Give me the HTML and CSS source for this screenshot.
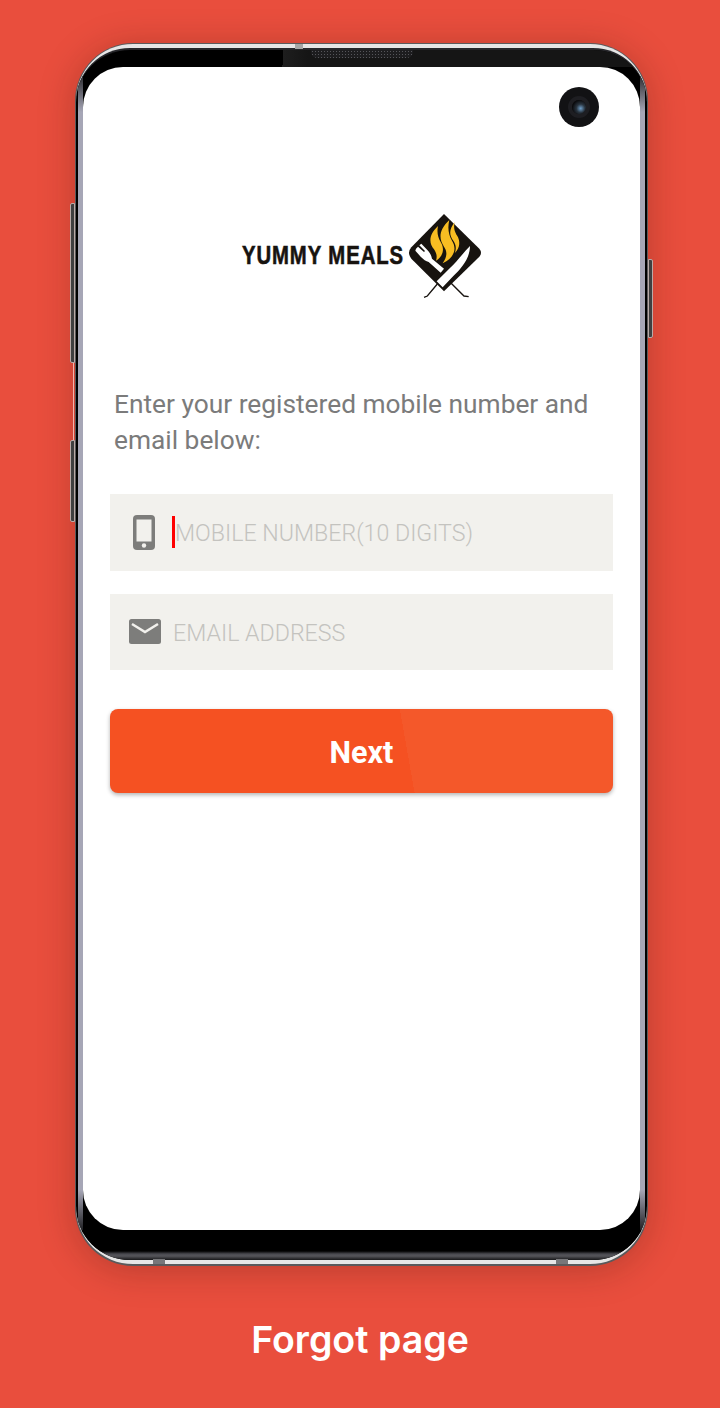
FILE: index.html
```html
<!DOCTYPE html>
<html lang="en">
<head>
    <meta charset="UTF-8">
    <meta name="viewport" content="width=device-width, initial-scale=1.0">
    <title>Forgot page</title>
    <link rel="stylesheet" href="styles.css">
</head>
<body>
    <div class="page">
        <div class="phone">
            <span class="side-key key-volume-up"></span>
            <span class="key-gap"></span>
            <span class="side-key key-bixby"></span>
            <span class="side-key key-power"></span>
            <span class="band-mark mark-top"></span>
            <span class="band-mark mark-bottom-left"></span>
            <span class="band-mark mark-bottom-right"></span>

            <div class="rim">
                <div class="bezel">
                    <div class="bezel-top">
                        <div class="speaker"></div>
                    </div>

                    <div class="screen">
                        <div class="camera"><span class="lens"></span></div>

                        <div class="logo">
                            <span class="logo-text">YUMMY MEALS</span>
                            <svg class="logo-mark" viewBox="555 30 240 270">
                                <path fill="#17130f" d="M672 42 L778 146 Q788 158 778 170 L672 274 L574 176 Q560 158 574 142 Z"/>
                                <path fill="#f8bd22" d="M654 78 C626 105 626 128 642 148 C650 160 652 170 648 182 C674 166 672 142 662 126 C654 112 650 98 654 78Z"/>
                                <path fill="#f8bd22" d="M688 60 C656 90 656 116 672 140 C682 154 682 170 668 190 C706 172 710 144 696 122 C686 105 682 85 688 60Z"/>
                                <path fill="#f8bd22" d="M704 66 C686 90 688 106 700 122 C708 134 710 146 704 160 C722 142 720 122 712 108 C704 95 700 85 704 66Z"/>
                                <path fill="#fff" d="M588 146 L594 140 L612 156 L615 153 L598 136 L604 131 L622 150 C630 158 634 166 636 176 L672 206 L662 218 L626 186 C618 184 610 178 602 170 L586 152Z"/>
                                <path fill="#fff" d="M750 138 C750 172 728 202 700 228 L668 262 L650 244 L690 204 C712 184 730 158 750 138Z"/>
                                <path fill="none" stroke="#17130f" stroke-width="4" d="M652 252 L622 288 L612 292 M692 248 L732 288 L746 290"/>
                            </svg>
                        </div>

                        <p class="intro">Enter your registered mobile number and email below:</p>

                        <form class="fields">
                            <div class="field">
                                <svg class="icon-phone" viewBox="0 0 22 35">
                                    <rect width="22" height="35" rx="4" fill="#7d7d7b"/>
                                    <rect x="3.5" y="4.5" width="15" height="22" fill="#f2f1ed"/>
                                    <circle cx="11" cy="30.5" r="2.2" fill="#f2f1ed"/>
                                </svg>
                                <span class="caret"></span>
                                <span class="placeholder">MOBILE NUMBER(10 DIGITS)</span>
                            </div>
                            <div class="field">
                                <svg class="icon-mail" viewBox="0 0 32 25">
                                    <rect width="32" height="25" rx="2.5" fill="#7d7d7b"/>
                                    <path d="M3 5 L16 13 L29 5" fill="none" stroke="#f2f1ed" stroke-width="2.6"/>
                                </svg>
                                <span class="placeholder">EMAIL ADDRESS</span>
                            </div>
                            <button class="next-button" type="button">Next</button>
                        </form>
                    </div>

                    <div class="bezel-bottom"></div>
                </div>
            </div>
        </div>

        <h1 class="caption">Forgot page</h1>
    </div>
</body>
</html>
```

FILE: styles.css
```css
body {
    margin: 0;
    background-color: #e94e3d;
}
.page {
    height: 1408px;
    padding-top: 43px;
    box-sizing: border-box;
    overflow: hidden;
}
.phone {
    position: relative;
    width: 573px;
    margin-left: 75px;
    padding: 1px 1px 2px 1px;
    box-sizing: border-box;
    background-color: #5a5a5c;
    border-radius: 58px;
    box-shadow: 0 4px 36px rgba(60, 20, 10, 0.28);
}
.rim {
    padding: 4px 0;
    background-color: #e6e6e6;
    border-radius: 57px;
}
.bezel {
    overflow: hidden;
    display: flex;
    flex-direction: column;
    background-color: #000;
    background-image:
        linear-gradient(to bottom, #000 12px, #a6a6b6 62px, #a6a6b6 calc(100% - 70px), #000 calc(100% - 20px)),
        linear-gradient(to bottom, #000 12px, #a6a6b6 62px, #a6a6b6 calc(100% - 70px), #000 calc(100% - 20px));
    background-size: 5px 100%, 5px 100%;
    background-position: 2px 0, calc(100% - 2px) 0;
    background-repeat: no-repeat;
    border-radius: 54px;
    border-top: 2px solid #26262a;
}
.bezel-top {
    height: 17px;
    display: flex;
    justify-content: center;
    background-image: linear-gradient(93deg, transparent 207px, #1e1e1e 207px, #151515 232px);
}
.speaker {
    width: 102px;
    height: 8px;
    border-radius: 0 0 6px 6px;
    background-color: #1d1d1f;
    background-image: radial-gradient(#55555a 0.8px, transparent 1px);
    background-size: 3px 3px;
}
.screen {
    position: relative;
    height: 1163px;
    margin: 0 7px;
    padding-top: 146px;
    box-sizing: border-box;
    background-color: #fff;
    border-radius: 40px;
}
.bezel-bottom {
    height: 30px;
    background-image: linear-gradient(to bottom, #000 21px, #4a4a50 24px, #55555a 26px, #18181a 30px);
}
.side-key {
    position: absolute;
    width: 5px;
    background-color: #3f3f40;
    border: 1px solid #b9a9a6;
    box-sizing: border-box;
}
.key-volume-up {
    left: -5px;
    top: 160px;
    height: 160px;
    border-radius: 2px 0 0 2px;
}
.key-gap {
    position: absolute;
    left: -2px;
    top: 320px;
    width: 1px;
    height: 77px;
    background-color: #f2b3ab;
}
.key-bixby {
    left: -5px;
    top: 397px;
    height: 82px;
    border-radius: 2px 0 0 2px;
}
.key-power {
    right: -5px;
    top: 216px;
    height: 79px;
    border-radius: 0 2px 2px 0;
}
.band-mark {
    position: absolute;
    height: 5px;
    background-color: #a5a5a5;
}
.mark-top {
    left: 220px;
    top: 1px;
    width: 8px;
}
.mark-bottom-left {
    left: 78px;
    bottom: 2px;
    width: 12px;
    background-color: #77777a;
}
.mark-bottom-right {
    right: 80px;
    bottom: 2px;
    width: 12px;
    background-color: #77777a;
}
.camera {
    position: absolute;
    top: 20px;
    right: 41px;
    width: 40px;
    height: 40px;
    display: flex;
    align-items: center;
    justify-content: center;
    background-color: #121214;
    border-radius: 50%;
}
.lens {
    width: 14px;
    height: 14px;
    border-radius: 50%;
    background: radial-gradient(circle at 62% 60%, #6f9fc9 0, #2a3540 35%, #0a0a0c 70%);
    box-shadow: 0 0 0 4px #1e1e22;
}
.logo {
    height: 86px;
    padding-left: 4px;
    display: flex;
    align-items: flex-start;
    justify-content: center;
    gap: 1px;
}
.logo-text {
    width: 162px;
    margin-top: 27px;
    font-family: "Liberation Sans", sans-serif;
    font-size: 26px;
    font-weight: bold;
    line-height: 30px;
    letter-spacing: 1.2px;
    white-space: nowrap;
    color: #17130f;
    -webkit-text-stroke: 0.6px #17130f;
    transform: scaleX(0.78);
    transform-origin: left center;
}
.logo-mark {
    width: 80px;
    height: 90px;
    margin-top: -3px;
}
.intro {
    margin: 87px 27px 0 31px;
    font-family: Roboto, sans-serif;
    font-size: 26.3px;
    line-height: 36px;
    color: #7b7b7b;
}
.fields {
    margin: 36px 27px 0;
    display: flex;
    flex-direction: column;
}
.field {
    height: 76.5px;
    margin-bottom: 23px;
    display: flex;
    align-items: center;
    background-color: #f2f1ed;
}
.icon-phone {
    width: 22px;
    height: 35px;
    margin: 0 17px 0 23px;
    flex-shrink: 0;
}
.icon-mail {
    width: 32px;
    height: 25px;
    margin: 0 12px 0 19px;
    flex-shrink: 0;
}
.caret {
    width: 3px;
    height: 32px;
    background-color: #f00;
}
.placeholder {
    padding-top: 2px;
    font-family: Roboto, sans-serif;
    font-size: 23.2px;
    font-weight: 300;
    color: #c4c3bf;
}
.next-button {
    height: 84px;
    margin-top: 16px;
    padding-top: 3px;
    border: none;
    border-radius: 8px;
    background-color: #f55122;
    background-image: linear-gradient(80deg, transparent 300px, #f4582a 300px);
    box-shadow: 0 2px 4px rgba(0, 0, 0, 0.3);
    font-family: Roboto, sans-serif;
    font-size: 30.5px;
    font-weight: bold;
    color: #fff;
}
.caption {
    margin: 50px 0 0;
    text-align: center;
    font-family: Inter, sans-serif;
    font-size: 37.5px;
    font-weight: 600;
    line-height: 48px;
    color: #fff;
}
```
